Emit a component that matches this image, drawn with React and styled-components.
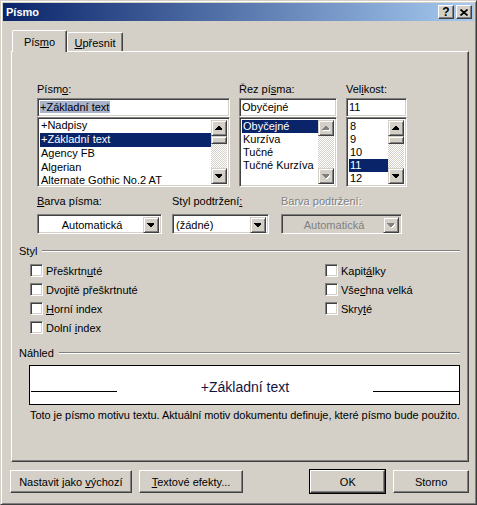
import React from 'react';
import styled, { createGlobalStyle, css } from 'styled-components';

const GlobalStyle = createGlobalStyle`
  html, body {
    margin: 0;
    padding: 0;
    background: #d4d0c8;
  }
  body {
    font-family: 'Liberation Sans', Arial, sans-serif;
    font-size: 11px;
    color: #000;
  }
  * {
    box-sizing: border-box;
  }
  u {
    text-decoration-thickness: 1px;
    text-underline-offset: 1px;
  }
`;

// classic 3D edges
const frameEdge = css`
  border: 1px solid;
  border-color: #d4d0c8 #404040 #404040 #d4d0c8;
  box-shadow: inset 1px 1px #fff, inset -1px -1px #808080;
  background: #d4d0c8;
`;

const buttonEdge = css`
  border: 1px solid;
  border-color: #fff #404040 #404040 #fff;
  box-shadow: inset -1px -1px #808080;
  background: #d4d0c8;
`;

const sunkenEdge = css`
  border: 1px solid;
  border-color: #808080 #fff #fff #808080;
  box-shadow: inset 1px 1px #404040, inset -1px -1px #d4d0c8;
`;

const Dialog = styled.div`
  width: 477px;
  height: 505px;
  display: flex;
  flex-direction: column;
  padding: 2px;
  ${frameEdge}
`;

const TitleBar = styled.div`
  height: 18px;
  display: flex;
  align-items: center;
  padding: 0 2px 0 3px;
  background: linear-gradient(to right, #0a246a, #a6caf0);
`;

const Title = styled.div`
  flex: 1;
  color: #fff;
  font-weight: bold;
  font-size: 11px;
`;

const CaptionButton = styled.div`
  ${buttonEdge}
  width: 16px;
  height: 14px;
  display: flex;
  align-items: center;
  justify-content: center;
  font-weight: bold;
  font-size: 12px;
  line-height: 1;
  & + & {
    margin-left: 2px;
  }
`;

const Body = styled.div`
  flex: 1;
  display: flex;
  flex-direction: column;
  padding: 9px 5px 0 8px;
`;

const TabRow = styled.div`
  height: 21px;
  display: flex;
  align-items: flex-end;
  position: relative;
  z-index: 1;
`;

const Tab = styled.div`
  height: ${(p) => (p.active ? '22px' : '19px')};
  width: ${(p) => p.w}px;
  margin-bottom: ${(p) => (p.active ? '-1px' : '0')};
  margin-left: ${(p) => (p.active ? '1px' : '0')};
  border-top: 1px solid #fff;
  border-left: 1px solid #fff;
  border-right: 1px solid #404040;
  border-radius: 2px 2px 0 0;
  box-shadow: inset -1px 0 #808080;
  background: #d4d0c8;
  display: flex;
  align-items: flex-start;
  justify-content: center;
  padding-top: ${(p) => (p.active ? '5px' : '4px')};
`;

const Panel = styled.div`
  height: 411px;
  border: 1px solid;
  border-color: #fff #404040 #404040 #fff;
  box-shadow: inset -1px -1px #808080;
  padding: 31px 8px 0 7px;
  display: flex;
  flex-direction: column;
`;

const FontRow = styled.div`
  display: flex;
  gap: 9px;
  margin-left: 18px;
`;

const Column = styled.div`
  width: ${(p) => p.w}px;
  display: flex;
  flex-direction: column;
`;

const Label = styled.div`
  height: 13px;
  line-height: 13px;
  margin-bottom: ${(p) => p.mb || 2}px;
  white-space: nowrap;
  color: ${(p) => (p.disabled ? '#808080' : '#000')};
  text-shadow: ${(p) => (p.disabled ? '1px 1px #fff' : 'none')};
`;

const TextField = styled.div`
  ${sunkenEdge}
  height: 19px;
  background: #fff;
  padding: 2px 0 0 2px;
  line-height: 13px;
  white-space: nowrap;
`;

const Selected = styled.span`
  background: #a9b4cc;
  padding: 0 1px 0 0;
`;

const ListBox = styled.div`
  ${sunkenEdge}
  height: 70px;
  background: #fff;
  padding: 2px 2px 1px 2px;
  display: flex;
  overflow: hidden;
`;

const Items = styled.div`
  flex: 1;
  overflow: hidden;
  display: flex;
  flex-direction: column;
  margin-top: ${(p) => p.shift || 0}px;
`;

const Item = styled.div`
  height: ${(p) => p.h}px;
  flex: none;
  line-height: ${(p) => p.lh || p.h}px;
  padding-left: 1px;
  white-space: nowrap;
  background: ${(p) => (p.selected ? '#0a246a' : 'transparent')};
  color: ${(p) => (p.selected ? '#fff' : '#000')};
`;

const ScrollBar = styled.div`
  width: 16px;
  margin-bottom: 1px;
  display: flex;
  flex-direction: column;
  background: repeating-conic-gradient(#d4d0c8 0% 25%, #fff 0% 50%) 0 0 / 2px 2px;
`;

const ScrollButton = styled.div`
  ${frameEdge}
  width: 16px;
  height: ${(p) => p.h || 16}px;
  flex: none;
  display: flex;
  align-items: center;
  justify-content: center;
`;

const Track = styled.div`
  flex: 1;
`;

const ComboRow = styled.div`
  display: flex;
  margin: 8px 0 0 18px;
`;

const ComboColumn = styled.div`
  width: ${(p) => p.w}px;
  margin-right: ${(p) => p.mr || 0}px;
  display: flex;
  flex-direction: column;
`;

const Combo = styled.div`
  ${sunkenEdge}
  height: 20px;
  margin-top: 4px;
  background: ${(p) => (p.disabled ? '#d4d0c8' : '#fff')};
  display: flex;
  padding: 2px;
`;

const ComboText = styled.div`
  flex: 1;
  line-height: 16px;
  text-align: ${(p) => (p.center ? 'center' : 'left')};
  padding-left: 1px;
  color: ${(p) => (p.disabled ? '#808080' : '#000')};
`;

const GroupHeader = styled.div`
  display: flex;
  align-items: center;
  height: 13px;
  margin-top: ${(p) => p.mt}px;
  &::after {
    content: '';
    flex: 1;
    margin-left: 5px;
    border-top: 1px solid #808080;
    border-bottom: 1px solid #fff;
  }
`;

const CheckGrid = styled.div`
  display: flex;
  margin: 7px 0 0 11px;
`;

const CheckColumn = styled.div`
  width: ${(p) => p.w}px;
  display: flex;
  flex-direction: column;
  gap: 6px;
`;

const CheckRow = styled.div`
  display: flex;
  align-items: center;
  height: 13px;
`;

const Box = styled.div`
  ${sunkenEdge}
  width: 13px;
  height: 13px;
  background: #fff;
  margin-right: 3px;
`;

const Preview = styled.div`
  height: 40px;
  margin: 6px 0 0 10px;
  border: 1px solid #000;
  background: #fff;
  display: flex;
  align-items: flex-end;
  padding: 0 0 12px 1px;
`;

const PreviewLine = styled.div`
  width: 86px;
  border-bottom: 1px solid #000;
`;

const PreviewText = styled.div`
  flex: 1;
  text-align: center;
  font-size: 14px;
  line-height: 14px;
  margin-bottom: -2px;
  color: #14143c;
`;

const Note = styled.div`
  margin: 4px 0 0 11px;
  line-height: 13px;
  white-space: nowrap;
  letter-spacing: -0.05px;
`;

const ButtonRow = styled.div`
  display: flex;
  margin: 8px 0 0 -1px;
`;

const Button = styled.div`
  ${buttonEdge}
  width: ${(p) => p.w}px;
  height: 23px;
  display: flex;
  align-items: center;
  justify-content: center;
  white-space: pre;
  margin-left: ${(p) => p.ml || 0}px;
  ${(p) =>
    p.default &&
    css`
      outline: 1px solid #000;
      outline-offset: 0;
    `}
`;

const UpArrow = ({ disabled }) => (
  <svg width="8" height="5" viewBox="0 0 8 5" shapeRendering="crispEdges">
    {disabled && <polygon points="4,1 5,1 8,4 8,5 1,5 1,4" fill="#fff" />}
    <polygon points="3,0 4,0 7,3 7,4 0,4 0,3" fill={disabled ? '#808080' : '#000'} />
  </svg>
);

const DownArrow = ({ disabled }) => (
  <svg width="8" height="5" viewBox="0 0 8 5" shapeRendering="crispEdges">
    {disabled && <polygon points="1,1 8,1 8,2 5,5 4,5 1,2" fill="#fff" />}
    <polygon points="0,0 7,0 7,1 4,4 3,4 0,1" fill={disabled ? '#808080' : '#000'} />
  </svg>
);

const Scroll = ({ disabled, thumb }) => (
  <ScrollBar>
    <ScrollButton>
      <UpArrow disabled={disabled} />
    </ScrollButton>
    {thumb && <ScrollButton h={8} />}
    <Track />
    <ScrollButton>
      <DownArrow disabled={disabled} />
    </ScrollButton>
  </ScrollBar>
);

const fonts = ['+Nadpisy', '+Základní text', 'Agency FB', 'Algerian', 'Alternate Gothic No.2 AT'];
const styles = ['Obyčejné', 'Kurzíva', 'Tučné', 'Tučné Kurzíva'];
const sizes = ['8', '9', '10', '11', '12'];

const Check = ({ children }) => (
  <CheckRow>
    <Box />
    <span>{children}</span>
  </CheckRow>
);

const App = () => {
  return (
    <>
      <GlobalStyle />
      <Dialog>
        <TitleBar>
          <Title>Písmo</Title>
          <CaptionButton>?</CaptionButton>
          <CaptionButton>
            <svg width="8" height="7" viewBox="0 0 8 7">
              <path d="M0.5 0.5 L7.5 6.5 M7.5 0.5 L0.5 6.5" stroke="#000" strokeWidth="1.7" />
            </svg>
          </CaptionButton>
        </TitleBar>
        <Body>
          <TabRow>
            <Tab active w={55}>
              <span>
                Pís<u>m</u>o
              </span>
            </Tab>
            <Tab w={56}>
              <span>
                <u>U</u>přesnit
              </span>
            </Tab>
          </TabRow>
          <Panel>
            <FontRow>
              <Column w={193}>
                <Label>
                  Písm<u>o</u>:
                </Label>
                <TextField>
                  <Selected>+Základní text</Selected>
                </TextField>
                <ListBox>
                  <Items shift={-1}>
                    {fonts.map((f, i) => {
                      const last = i === fonts.length - 1;
                      return (
                        <Item key={f} h={last ? 12 : 14} lh={last ? 11 : 12} selected={i === 1}>
                          {f}
                        </Item>
                      );
                    })}
                  </Items>
                  <Scroll thumb />
                </ListBox>
              </Column>
              <Column w={98}>
                <Label>
                  Řez pí<u>s</u>ma:
                </Label>
                <TextField>Obyčejné</TextField>
                <ListBox>
                  <Items>
                    {styles.map((s, i) => (
                      <Item key={s} h={13} selected={i === 0}>
                        {s}
                      </Item>
                    ))}
                  </Items>
                  <Scroll disabled />
                </ListBox>
              </Column>
              <Column w={61}>
                <Label>
                  Vel<u>i</u>kost:
                </Label>
                <TextField>11</TextField>
                <ListBox>
                  <Items>
                    {sizes.map((s) => (
                      <Item key={s} h={13} selected={s === '11'}>
                        {s}
                      </Item>
                    ))}
                  </Items>
                  <Scroll thumb />
                </ListBox>
              </Column>
            </FontRow>

            <ComboRow>
              <ComboColumn w={125} mr={10}>
                <Label>
                  <u>B</u>arva písma:
                </Label>
                <Combo>
                  <ComboText center>Automatická</ComboText>
                  <ScrollButton>
                    <DownArrow />
                  </ScrollButton>
                </Combo>
              </ComboColumn>
              <ComboColumn w={97} mr={12}>
                <Label>
                  Styl podtržení<u>:</u>
                </Label>
                <Combo>
                  <ComboText>(žádné)</ComboText>
                  <ScrollButton>
                    <DownArrow />
                  </ScrollButton>
                </Combo>
              </ComboColumn>
              <ComboColumn w={121}>
                <Label disabled>Barva podtržení:</Label>
                <Combo disabled>
                  <ComboText center disabled>
                    Automatická
                  </ComboText>
                  <ScrollButton>
                    <DownArrow disabled />
                  </ScrollButton>
                </Combo>
              </ComboColumn>
            </ComboRow>

            <GroupHeader mt={10}>Styl</GroupHeader>
            <CheckGrid>
              <CheckColumn w={295}>
                <Check>
                  Přeškrtn<u>u</u>té
                </Check>
                <Check>
                  Dvo<u>j</u>itě přeškrtnuté
                </Check>
                <Check>
                  <u>H</u>orní index
                </Check>
                <Check>
                  Dolní <u>i</u>ndex
                </Check>
              </CheckColumn>
              <CheckColumn w={120}>
                <Check>
                  Kapit<u>á</u>lky
                </Check>
                <Check>
                  Vše<u>c</u>hna velká
                </Check>
                <Check>
                  Skry<u>t</u>é
                </Check>
              </CheckColumn>
            </CheckGrid>

            <GroupHeader mt={12}>Náhled</GroupHeader>
            <Preview>
              <PreviewLine />
              <PreviewText>+Základní text</PreviewText>
              <PreviewLine />
            </Preview>
            <Note>
              Toto je písmo motivu textu. Aktuální motiv dokumentu definuje, které písmo bude použito.
            </Note>
          </Panel>
          <ButtonRow>
            <Button w={122}>
              <span>
                Nastavit jako <u>v</u>ýchozí
              </span>
            </Button>
            <Button w={105} ml={7}>
              <span>
                <u>T</u>extové efekty...
              </span>
            </Button>
            <Button w={75} ml={67} default>
              OK
            </Button>
            <Button w={76} ml={8}>
              Storno
            </Button>
          </ButtonRow>
        </Body>
      </Dialog>
    </>
  );
};

export default App;
